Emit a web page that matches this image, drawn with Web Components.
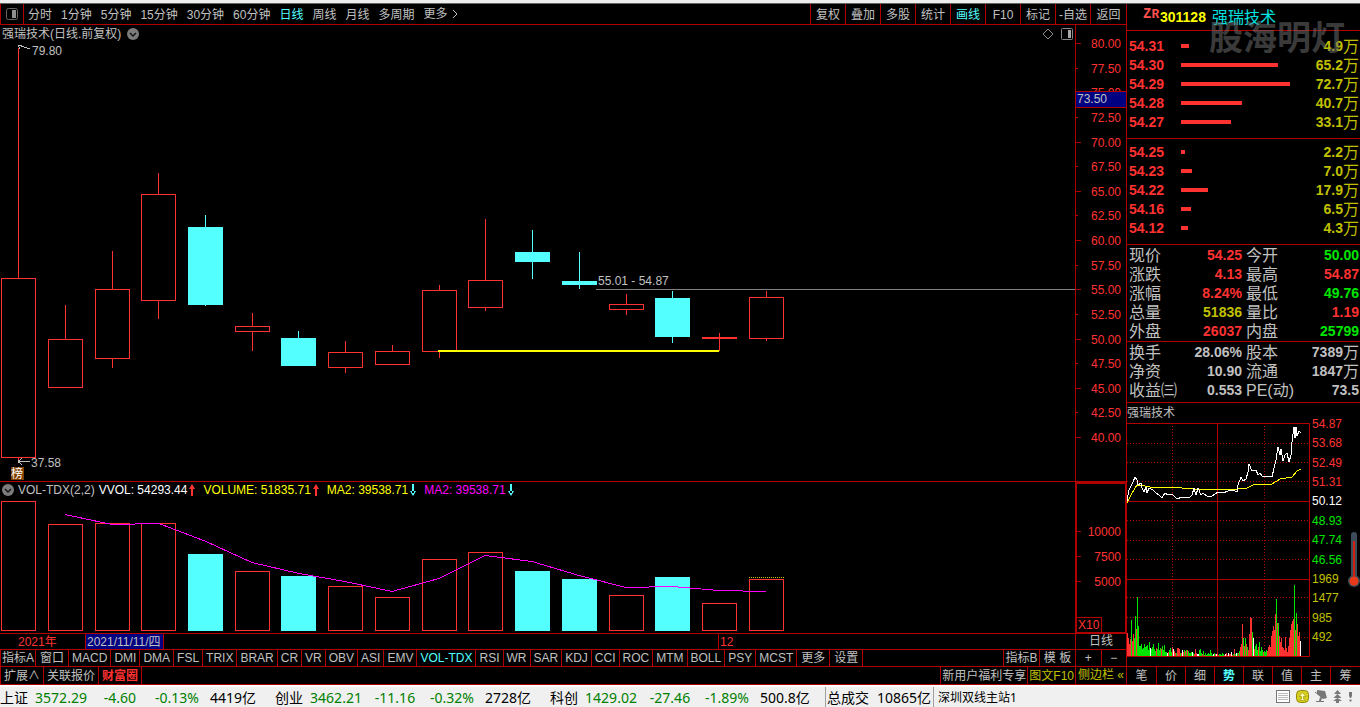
<!DOCTYPE html>
<html lang="zh-CN">
<head>
<meta charset="utf-8">
<title>强瑞技术 301128</title>
<style>
  html { background: #000; }
  body {
    margin: 0;
    font: 12px/16px "Liberation Sans", "Noto Sans CJK SC", sans-serif;
    color: #c0c0c0;
    --line: #b00000;
    --up: #ff3232;
    --down: #54ffff;
    --green: #00e600;
    --gold: #c0c000;
    --num: "Liberation Sans", "Noto Sans CJK SC", sans-serif;
  }
</style>
</head>
<body>
<stock-terminal></stock-terminal>

<script>
const RESET = `
  *, *::before, *::after { box-sizing: border-box; }
  button { font: inherit; color: inherit; background: none; border: 0; padding: 0; margin: 0; white-space: nowrap; cursor: pointer; }
  table { border-collapse: collapse; border-spacing: 0; }
  td, th { padding: 0; font-weight: inherit; text-align: left; white-space: nowrap; }
  svg { display: block; }
`;

class Part extends HTMLElement {
  connectedCallback() {
    if (this.shadowRoot) return;
    this.attachShadow({ mode: 'open' }).innerHTML = `<style>${RESET}${this.css()}</style>${this.html()}`;
  }
  css() { return ''; }
  html() { return ''; }
}

/* ---------- Toolbar over the chart ---------- */
customElements.define('period-bar', class extends Part {
  css() { return `
    :host { display: flex; height: 21px; border-bottom: 1px solid var(--line); border-left: 1px solid var(--line); line-height: 22px; }
    .layout { width: 23px; border-right: 1px solid var(--line); display: grid; place-items: center; }
    .periods { flex: 1; display: flex; gap: 9px; padding-left: 4px; overflow: hidden; }
    .actions { display: flex; }
    .actions button { width: 35px; border-left: 1px solid var(--line); }
    .actions button:last-child { width: 36px; }
    .on { color: var(--down); }
    .more { display: flex; align-items: center; gap: 4px; }
  `; }
  html() {
    const periods = ['分时', '1分钟', '5分钟', '15分钟', '30分钟', '60分钟', '日线', '周线', '月线', '多周期'];
    const actions = ['复权', '叠加', '多股', '统计', '画线', 'F10', '标记', '-自选', '返回'];
    return `
    <button class="layout" aria-label="布局"><svg width="12" height="12" viewBox="0 0 12 12"><rect x=".5" y=".5" width="11" height="11" rx="2" fill="none" stroke="#666"/><rect x="6" y="2" width="4" height="8" fill="#909090"/></svg></button>
    <nav class="periods">${periods.map(p => `<button class="${p === '日线' ? 'on' : ''}">${p}</button>`).join('')}
      <button class="more">更多<svg width="6" height="10" viewBox="0 0 6 10"><path d="M1 1l4 4-4 4" fill="none" stroke="#c0c0c0"/></svg></button></nav>
    <div class="actions">${actions.map(a => `<button class="${a === '画线' ? 'on' : ''}">${a}</button>`).join('')}</div>`;
  }
});

const CHEVRON = `<svg width="12" height="12" viewBox="0 0 12 12"><circle cx="6" cy="6" r="6" fill="#7c7c7c"/><path d="M3 5l3 3 3-3" fill="none" stroke="#111" stroke-width="1.4"/></svg>`;

/* x, high, body top, body bottom, low, volume top, direction */
const DAYS = [
  [1, 48, 278, 458, 461, 501, 1], [48, 305, 339, 388, 388, 524, 1], [95, 251, 289, 359, 368, 523, 1],
  [141, 173, 194, 301, 319, 523, 1], [188, 215, 227, 305, 306, 554, 0], [235, 313, 326, 332, 351, 571, 1],
  [281, 331, 338, 366, 366, 576, 0], [328, 341, 352, 368, 373, 586, 1], [375, 345, 351, 365, 365, 597, 1],
  [422, 285, 290, 352, 358, 559, 1], [468, 219, 280, 308, 311, 552, 1], [515, 230, 252, 262, 279, 571, 0],
  [562, 252, 281, 285, 289, 579, 0], [609, 294, 304, 310, 315, 595, 1], [655, 291, 298, 337, 343, 577, 0],
  [702, 333, 337, 339, 351, 603, 1], [749, 291, 297, 339, 341, 579, 1]
];
const box = (x, top, bottom, up) => up
  ? `<rect x="${x + .5}" y="${top + .5}" width="34" height="${bottom - top - 1}" fill="none" stroke="#ff3232"/>`
  : `<rect x="${x}" y="${top}" width="35" height="${bottom - top}" fill="#54ffff"/>`;

/* ---------- Daily candles ---------- */
customElements.define('candle-chart', class extends Part {
  css() { return `
    :host { display: block; position: relative; height: 457px; border-bottom: 1px solid var(--line); overflow: hidden; }
    header { position: absolute; inset: 1px 2px auto 2px; display: flex; align-items: center; gap: 6px; }
    header .tools { margin-left: auto; display: flex; align-items: center; gap: 7px; }
    .plot { width: 100%; height: 456px; }
    text { font: 12px var(--num); fill: #c0c0c0; }
    .rank { position: absolute; left: 11px; top: 442px; width: 13px; height: 13px; background: #804000; color: #fff; line-height: 14px; }
  `; }
  html() {
    const T = 25;
    const candles = DAYS.map(([x, hi, top, bot, lo, v, up]) => {
      const w = (a, b) => b > a ? `<rect x="${x + 17}" y="${a - T}" width="1" height="${b - a}" fill="${up ? '#ff3232' : '#54ffff'}"/>` : '';
      return w(hi, top) + w(bot, lo) + box(x, top - T, bot - T, up);
    }).join('');
    return `
    <svg class="plot" shape-rendering="crispEdges">
      ${candles}
      <line x1="596" x2="100%" y1="264.5" y2="264.5" stroke="#808080"/>
      <rect x="438" y="325" width="281" height="2" fill="#ff0"/>
      <g fill="none" stroke="#c0c0c0"><path d="M18 20l12 4M18 20h4M18 20l2 4"/><path d="M18 436.5h12M18 436.5l4-3M18 436.5l4 3"/></g>
      <text x="32" y="30">79.80</text>
      <text x="31" y="442">37.58</text>
      <text x="598" y="260">55.01 - 54.87</text>
    </svg>
    <header><span>强瑞技术(日线.前复权)</span>${CHEVRON}
      <span class="tools">
        <svg width="12" height="12" viewBox="0 0 12 12"><path d="M6 1l5 5-5 5-5-5z" fill="none" stroke="#888"/></svg>
        <svg width="12" height="12" viewBox="0 0 12 12"><rect x=".5" y=".5" width="11" height="11" rx="1" fill="none" stroke="#888"/><rect x="7" y="2" width="3" height="8" fill="#aaa"/></svg>
      </span></header>
    <span class="rank">榜</span>`;
  }
});

customElements.define('price-axis', class extends Part {
  css() { return `
    :host { display: flex; flex-direction: column; justify-content: space-between; position: relative;
      border-left: 1px solid var(--line); border-bottom: 1px solid var(--line); padding: 11px 0 35px; color: var(--up); }
    span { display: block; padding-right: 5px; text-align: right; position: relative; }
    span::before { content: ""; position: absolute; left: 0; top: 7px; width: 2px; height: 1px; background: var(--line); }
    span:nth-of-type(odd)::before { width: 5px; }
    output { position: absolute; left: 0; right: 0; top: 66px; height: 17px; padding-left: 1px; line-height: 15px;
      background: #000080; color: #c0c0c0; border: solid var(--line); border-width: 1px 0; }
  `; }
  html() {
    let s = '';
    for (let p = 80; p >= 40; p -= 2.5) s += `<span>${p.toFixed(2)}</span>`;
    return s + '<output>73.50</output>';
  }
});

/* ---------- Volume pane ---------- */
customElements.define('volume-chart', class extends Part {
  css() { return `
    :host { display: block; position: relative; height: 152px; border-bottom: 1px solid var(--line); overflow: hidden; }
    header { position: absolute; inset: 0 0 auto 2px; display: flex; align-items: center; gap: 8px; white-space: nowrap; }
    header span { display: flex; align-items: center; gap: 2px; }
    header span:first-child { gap: 4px; margin-right: -4px; }
    .plot { width: 100%; height: 151px; }
  `; }
  html() {
    const T = 482;
    const up = `<svg width="6" height="12" viewBox="0 0 6 12"><path d="M2 3h2v9H2zM0 5L3 0l3 5z" fill="#ff3232"/></svg>`;
    const down = `<svg width="6" height="12" viewBox="0 0 6 12"><path d="M2 0h2v9H2zM0 7l3 5 3-5z" fill="#54ffff"/></svg>`;
    const ma = [[65, 514], [112, 524], [159, 523], [206, 541], [252, 562], [299, 573], [345, 581], [392, 591], [439, 578], [485, 555], [532, 561], [579, 575], [626, 587], [672, 586], [719, 590], [766, 591]];
    return `
    <svg class="plot" shape-rendering="crispEdges">
      ${DAYS.map(d => box(d[0], d[5] - T, 631 - T, d[6])).join('')}
      <line x1="749" x2="784" y1="95.5" y2="95.5" stroke="#c0c000" stroke-dasharray="1 1"/>
      <polyline fill="none" stroke="#f0f" points="${ma.map(([x, y]) => `${x},${y - T + .5}`).join(' ')}"/>
    </svg>
    <header>
      <span>${CHEVRON}VOL-TDX(2,2)</span>
      <span style="color:#fff">VVOL: 54293.44${up}</span>
      <span style="color:#ff0">VOLUME: 51835.71${up}</span>
      <span style="color:#ff0">MA2: 39538.71${down}</span>
      <span style="color:#f0f">MA2: 39538.71${down}</span>
    </header>`;
  }
});

customElements.define('volume-axis', class extends Part {
  css() { return `
    :host { display: flex; flex-direction: column; gap: 9px; border: 2px solid var(--line); border-right-width: 1px; padding-top: 40px; color: var(--up); }
    span { padding-right: 4px; text-align: right; position: relative; }
    span::before { content: ""; position: absolute; left: 0; top: 7px; width: 4px; height: 1px; background: var(--line); }
    small { font-size: 12px; line-height: 14px; margin-top: auto; align-self: flex-start; padding: 0 2px 0 1px; border: solid var(--line); border-width: 1px 1px 0 0; }
  `; }
  html() { return '<span>10000</span><span>7500</span><span>5000</span><small>X10</small>'; }
});

customElements.define('date-axis', class extends Part {
  css() { return `
    :host { display: grid; grid-template-columns: 85px 79px 554px 1fr; height: 16px; line-height: 16px; border-bottom: 1px solid var(--line); color: var(--up); white-space: nowrap; overflow: hidden; }
    .year { padding-left: 18px; }
    .cursor { background: #000080; color: #c0c0c0; border: solid var(--line); border-width: 0 1px; padding-left: 1px; overflow: hidden; }
    .month { grid-column: 4; border-left: 1px solid var(--line); padding-left: 1px; }
  `; }
  html() { return '<span class="year">2021年</span><span class="cursor">2021/11/11/四</span><span class="month">12</span>'; }
});

/* ---------- Indicator and extension rows ---------- */
customElements.define('indicator-tabs', class extends Part {
  css() { return `
    :host { display: flex; height: 17px; line-height: 17px; border-bottom: 1px solid var(--line); border-left: 1px solid var(--line); overflow: hidden; }
    button { padding: 0 3px; border-right: 1px solid var(--line); }
    button:first-of-type { padding: 0 1px; }
    .on { color: var(--down); }
    .wide { padding: 0 4px; }
    .end { margin-left: auto; display: flex; }
    .end button { width: 36px; padding: 0; border-right: 0; border-left: 1px solid var(--line); }
  `; }
  html() {
    const tabs = '指标A 窗口 MACD DMI DMA FSL TRIX BRAR CR VR OBV ASI EMV VOL-TDX RSI WR SAR KDJ CCI ROC MTM BOLL PSY MCST 更多 设置'.split(' ');
    return tabs.map(t => `<button class="${t === 'VOL-TDX' ? 'on' : /[窗多置]/.test(t) ? 'wide' : ''}">${t}</button>`).join('')
      + '<div class="end"><button>指标B</button><button>模 板</button></div>';
  }
});

customElements.define('extension-tabs', class extends Part {
  css() { return `
    :host { display: flex; height: 18px; line-height: 18px; border-bottom: 1px solid var(--line); border-left: 1px solid var(--line); overflow: hidden; }
    button { padding: 0 3px; border-right: 1px solid var(--line); }
    .hot { color: var(--up); font-weight: bold; }
    .end { margin-left: auto; display: flex; }
    .end button { padding: 0 1px; border-right: 0; border-left: 1px solid var(--line); }
    .gold { color: var(--gold); }
  `; }
  html() { return `<button>扩展∧</button><button>关联报价</button><button class="hot">财富圈</button>
    <div class="end"><button>新用户福利专享</button><button class="gold">图文F10</button></div>`; }
});

customElements.define('axis-cell', class extends Part {
  css() { return `
    :host { display: flex; border-left: 1px solid var(--line); border-bottom: 1px solid var(--line); overflow: hidden; }
    ::slotted(button) { flex: 1; }
  `; }
  html() { return '<slot></slot>'; }
});

/* ---------- Quote panel ---------- */
customElements.define('stock-title', class extends Part {
  css() { return `
    :host { display: flex; position: relative; height: 27px; padding-left: 16px; border-bottom: 1px solid var(--line); line-height: 27px; white-space: nowrap; }
    .tag { color: #ff5050; font: bold 14px/20px "Liberation Mono", monospace; width: 17px; }
    .tag small { font-size: 13px; }
    .code { color: #ff0; font: bold 14px/27px var(--num); width: 52px; }
    .name { color: #00e0e0; font-size: 16px; }
    .mark { position: absolute; left: 82px; top: 12px; font: bold 34px/40px "Noto Sans CJK SC", sans-serif; color: rgba(110,110,110,.55); }
  `; }
  html() { return '<span class="tag">Z<small>R</small></span><span class="code">301128</span><span class="name">强瑞技术</span><span class="mark">股海明灯</span>'; }
});

customElements.define('order-book', class extends Part {
  css() { return `
    :host { display: block; border-bottom: 1px solid var(--line); padding: 6px 0; }
    :host([side="bid"]) { padding-top: 4px; }
    table { width: 100%; table-layout: fixed; font: bold 14px/19px var(--num); }
    tr { height: 19px; }
    th { width: 54px; padding-left: 2px; color: var(--up); }
    td i { display: block; height: 4px; margin-bottom: 2px; background: var(--up); }
    td:last-child { width: 64px; text-align: right; color: var(--gold); padding-right: 1px; }
    b { font: 16px/17px "Noto Sans CJK SC", sans-serif; vertical-align: top; }
  `; }
  html() {
    const rows = {
      ask: [['54.31', 8, '4.9'], ['54.30', 97, '65.2'], ['54.29', 109, '72.7'], ['54.28', 61, '40.7'], ['54.27', 50, '33.1']],
      bid: [['54.25', 4, '2.2'], ['54.23', 11, '7.0'], ['54.22', 27, '17.9'], ['54.16', 10, '6.5'], ['54.12', 7, '4.3']]
    }[this.getAttribute('side')];
    return `<table>${rows.map(([p, w, v]) => `<tr><th scope="row">${p}</th><td><i style="width:${w}px"></i></td><td>${v}<b>万</b></td></tr>`).join('')}</table>`;
  }
});

customElements.define('quote-table', class extends Part {
  css() { return `
    :host { display: block; border-bottom: 1px solid var(--line); padding-top: 1px; }
    :host([set="base"]) { padding-bottom: 2px; }
    table { width: 100%; table-layout: fixed; line-height: 19px; }
    tr { height: 19px; }
    th { font-size: 16px; width: 50px; padding-left: 2px; }
    th ~ th { width: 50px; padding-left: 4px; }
    td { font: bold 14px/19px var(--num); text-align: right; width: 65px; }
    td:last-child { width: auto; padding-right: 1px; }
    b { font: 16px/17px "Noto Sans CJK SC", sans-serif; vertical-align: top; }
    .u { color: var(--up); } .d { color: var(--green); } .g { color: var(--gold); }
  `; }
  html() {
    const rows = {
      day: [['现价', 'u', '54.25', '今开', 'd', '50.00'], ['涨跌', 'u', '4.13', '最高', 'u', '54.87'], ['涨幅', 'u', '8.24%', '最低', 'd', '49.76'],
        ['总量', 'g', '51836', '量比', 'u', '1.19'], ['外盘', 'u', '26037', '内盘', 'd', '25799']],
      base: [['换手', '', '28.06%', '股本', '', '7389<b>万</b>'], ['净资', '', '10.90', '流通', '', '1847<b>万</b>'], ['收益㈢', '', '0.553', 'PE(动)', '', '73.5']]
    }[this.getAttribute('set')];
    return `<table>${rows.map(r => `<tr><th scope="row">${r[0]}</th><td class="${r[1]}">${r[2]}</td><th scope="row">${r[3]}</th><td class="${r[4]}">${r[5]}</td></tr>`).join('')}</table>`;
  }
});

/* ---------- Intraday chart ---------- */
/* One bar per minute slot: colour letter, then height */
const OPENING = 'r23 r18 r12 r17 g36 r15 r22 g18 g40 r27 g59 g30 g10 g10 g12 g7 g8 g12 g9 g10 g11 g6 g14 w8 g7 g9 g12 g7 g5 r8 g7 g13 g6 g8 r7 g10 g6 g11 g4 g4 w3 r4 g6 g8 g4 r9 w7 r5 r3 g3 r8 r8 r7 g3 r3 w6 r4 g6 r5 g6 r6 g5 g3 g3 g4 w4 g3';
const MIDDAY = 'r2 r7 r3 w2 w2 g6 g7 g3 r2 g5 r1 g3 g1 g2 g3 g2 g6 g3 g1 w2 g3 r2 w2 r2 r1 g2 g2 g1 g3 g2 r1 w2 r3 r1 w3 r2 r2 w4 r1 g2 r7 g2 w3 g3 r3 g5 r9 r12 r32 g18 r10 g18 r12 g9 r6 r22 r39 r38 g24 w18 r7 g10 g12 g6 r9 g14 g5 g9 g6 r4';
const CLOSING = 'g5 g4 g6 r5 r9 r11 r9 r20 r25 r30 r26 r42 g57 r33 g33 r20 r14 r18 r9 r8 r6 r19 r8 r4 r10 r18 r26 r32 r35 r37 g71 r26 g43 r32 r20 r24 w15';

customElements.define('intraday-chart', class extends Part {
  css() { return `
    :host { display: block; position: relative; }
    h2 { margin: 0; font: inherit; line-height: 21px; height: 20px; }
    .row { display: flex; height: 234px; }
    .labels { display: flex; flex-direction: column; justify-content: space-between; padding-left: 2px; margin: -7px 0 12px; }
    .u { color: var(--up); } .d { color: var(--green); } .w { color: #fff; } .g { color: var(--gold); }
    .heat { position: absolute; right: 0; top: 129px; }
  `; }
  html() {
    const price = '0,78 2,67 4,63 6,59 8,54 10,57 11,62 14,60 15,65 17,69 19,64 20,70 22,65 26,67 29,70 32,72 35,75 38,70 41,72 45,71 48,74 50,76 55,74 62,75 65,72 67,65 69,72 71,65 74,72 76,70 80,73 84,74 88,71 91,69 96,70 101,68 106,67 110,69 111,62 114,54 116,58 119,56 121,49 122,41 125,48 129,47 131,52 133,50 136,54 141,53 145,54 147,45 149,37 151,24 153,32 154,26 156,38 158,32 160,30 162,39 164,32 165,19 167,4 168,15 169,4 170,13 172,8 174,10';
    const avg = '0,80 5,70 10,62 18,63 23,64 43,64 66,66 110,66 120,65 126,62 145,61 153,56 165,54 170,48 174,46';
    const colour = { r: '#ff3232', g: '#00e600', w: '#fff' };
    const bars = `${OPENING} ${MIDDAY} ${CLOSING}`.split(' ').map((b, i) => `<rect x="${i}" y="${233 - b.slice(1)}" width="1" height="${b.slice(1)}" fill="${colour[b[0]]}"/>`).join('');
    const h = (y, dot) => `<line x1="0" x2="183" y1="${y + .5}" y2="${y + .5}"${dot ? ' stroke-dasharray="1 2"' : ''}/>`;
    const v = (x, dot) => `<line x1="${x + .5}" x2="${x + .5}" y1="0" y2="234"${dot ? ' stroke-dasharray="1 2"' : ''}/>`;
    const labels = [['u', '54.87'], ['u', '53.68'], ['u', '52.49'], ['u', '51.31'], ['w', '50.12'], ['d', '48.93'], ['d', '47.74'], ['d', '46.56'], ['g', '1969'], ['g', '1477'], ['g', '985'], ['g', '492']];
    return `
    <h2>强瑞技术</h2>
    <div class="row">
      <svg width="183" height="234" shape-rendering="crispEdges">
        <g stroke="#b00000">${[0, 78, 156, 233].map(y => h(y)).join('')}${[20, 39, 58, 97, 117, 136, 174, 194, 214].map(y => h(y, 1)).join('')}${v(90)}${v(182)}${v(45, 1)}${v(137, 1)}</g>
        ${bars}
        <polyline points="${avg}" fill="none" stroke="#ff0"/>
        <polyline points="${price}" fill="none" stroke="#fff"/>
      </svg>
      <div class="labels">${labels.map(([c, t]) => `<span class="${c}">${t}</span>`).join('')}</div>
    </div>
    <svg class="heat" width="12" height="56" viewBox="0 0 12 56">
      <rect x="3" y="0" width="6" height="50" rx="3" fill="#3c4c5a"/><circle cx="6" cy="49" r="6" fill="#3c4c5a"/>
      <rect x="5" y="9" width="2" height="38" fill="#d02010"/><circle cx="6" cy="49" r="4.5" fill="#e83a18"/>
    </svg>`;
  }
});

customElements.define('panel-tabs', class extends Part {
  css() { return `
    :host { display: grid; grid-template-columns: repeat(7, 29px) 1fr; height: 19px; margin-top: auto; border: solid var(--line); border-width: 1px 0; line-height: 18px; overflow: hidden; }
    button + button { border-left: 1px solid var(--line); }
    .on { color: var(--down); font-weight: bold; }
  `; }
  html() { return [...'笔价细势联值主筹'].map(t => `<button class="${t === '势' ? 'on' : ''}">${t}</button>`).join(''); }
});

/* ---------- Status bar ---------- */
customElements.define('status-bar', class extends Part {
  css() { return `
    :host { display: flex; height: 22px; background: #f0f0f0; border-top: 2px solid #fff; color: #000; font: 14px/22px "Noto Sans", "Noto Sans CJK SC", sans-serif; white-space: nowrap; overflow: hidden; }
    .index { display: grid; grid-template-columns: 28px 66px 52px 62px 67px; line-height: 22px; }
    .index span { text-align: center; color: #008000; }
    .index span:first-child, .index span:last-child { color: #000; text-align: left; }
    .index span:last-child { padding-left: 2px; }
    .total { display: flex; gap: 8px; border: solid #a0a0a0; border-width: 0 1px; padding: 0 2px 0 1px; }
    .host { font-size: 12px; padding-left: 4px; }
    .icons { margin-left: auto; display: flex; align-items: center; gap: 6px; padding-right: 7px; }
  `; }
  html() {
    const idx = [['上证', '3572.29', '-4.60', '-0.13%', '4419亿'], ['创业', '3462.21', '-11.16', '-0.32%', '2728亿'], ['科创', '1429.02', '-27.46', '-1.89%', '500.8亿']];
    return idx.map(r => `<div class="index">${r.map(c => `<span>${c}</span>`).join('')}</div>`).join('') + `
    <div class="total"><span>总成交</span><span>10865亿</span></div><span class="host">深圳双线主站1</span>
    <div class="icons">
      <svg width="14" height="14" viewBox="0 0 14 14"><rect x=".5" y=".5" width="13" height="12" fill="#fff" stroke="#777"/><path d="M2 3.5h10M2 5.5h10M2 7.5h10M2 9.5h10" stroke="#bbb"/></svg>
      <svg width="13" height="14" viewBox="0 0 13 14"><rect x=".5" y=".5" width="12" height="12" rx="4" fill="#d8d020" stroke="#908800"/><path d="M6.5 2.5L3 6.500h2.500V9H4v1.500h5V9H7.500V6.500H10z" fill="#fffbb0" stroke="#908800" stroke-width=".6"/></svg>
      <svg width="12" height="14" viewBox="0 0 12 14"><path d="M2 0l8 1 2 7-4 1-6-5zM5 7l-1 4H1v1h8v-1H6l1-3z" fill="#777"/><path d="M0 2l8 6" stroke="#777"/></svg>
      <svg width="9" height="14" viewBox="0 0 9 14"><path d="M4.5 0L8 4H1zM4.5 4l4 4h-8zM4.5 8L9 11H0zM3 10h3v3H3z" fill="#777"/></svg>
      <svg width="5" height="14" viewBox="0 0 5 14"><path d="M1 2h3v4L3 8H2L1 6zM1.500 9.500h2v2h-2z" fill="#777"/></svg>
    </div>`;
  }
});

/* ---------- Whole window ---------- */
customElements.define('stock-terminal', class extends Part {
  css() { return `
    :host { display: flex; flex-direction: column; min-height: 100vh; background: #000; }
    .edge { height: 4px; background: #eee; border-bottom: 1px solid #666; }
    .work { display: grid; grid-template-columns: minmax(0, 1fr) 234px; flex: 1; }
    .charts { display: grid; grid-template-columns: minmax(0, 1fr) 51px; align-content: start; }
    period-bar { grid-column: 1 / -1; }
    .panel { display: flex; flex-direction: column; border-left: 1px solid var(--line); }
    .dates { height: 16px; line-height: 15px; }
    .zoom { height: 17px; line-height: 16px; }
    .zoom button + button { border-left: 1px solid var(--line); }
    .gold { height: 18px; line-height: 17px; color: var(--gold); }
  `; }
  html() { return `
    <div class="edge"></div>
    <div class="work">
      <main class="charts">
        <period-bar></period-bar>
        <candle-chart></candle-chart><price-axis></price-axis>
        <volume-chart></volume-chart><volume-axis></volume-axis>
        <date-axis></date-axis><axis-cell class="dates"><button>日线</button></axis-cell>
        <indicator-tabs></indicator-tabs><axis-cell class="zoom"><button>+</button><button>−</button></axis-cell>
        <extension-tabs></extension-tabs><axis-cell class="gold"><button>侧边栏 «</button></axis-cell>
      </main>
      <aside class="panel">
        <stock-title></stock-title>
        <order-book side="ask"></order-book>
        <order-book side="bid"></order-book>
        <quote-table set="day"></quote-table>
        <quote-table set="base"></quote-table>
        <intraday-chart></intraday-chart>
        <panel-tabs></panel-tabs>
      </aside>
    </div>
    <status-bar></status-bar>`; }
});
</script>
</body>
</html>
